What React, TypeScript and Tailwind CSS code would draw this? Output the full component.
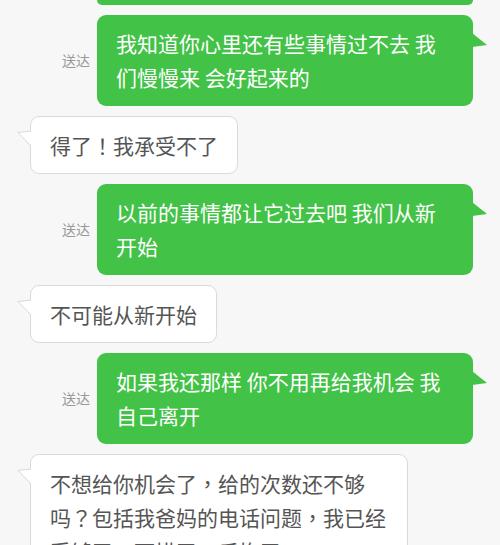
import type { ReactNode } from "react";

const font = { fontFamily: '"Noto Sans CJK SC", "Noto Sans", sans-serif' };
const punctFont = { fontFamily: '"Noto Sans CJK TC", "Noto Sans CJK SC", sans-serif' };

type Msg = { me: boolean; text: string };

const messages: Msg[] = [
  { me: true, text: "我知道你心里还有些事情过不去 我们慢慢来 会好起来的" },
  { me: false, text: "得了！我承受不了" },
  { me: true, text: "以前的事情都让它过去吧 我们从新开始" },
  { me: false, text: "不可能从新开始" },
  { me: true, text: "如果我还那样 你不用再给我机会 我自己离开" },
  { me: false, text: "不想给你机会了，给的次数还不够吗？包括我爸妈的电话问题，我已经受够了，可惜了，后悔了" },
];

// full-width punctuation sits centred in the screenshot, like the TC face draws it
function withPunct(text: string): ReactNode[] {
  return text.split(/([！，？])/).map((part, i) =>
    /^[！，？]$/.test(part) ? (
      <span key={i} style={punctFont}>
        {part}
      </span>
    ) : (
      part
    )
  );
}

function MyBubble({ text }: { text: string }) {
  return (
    <div className="flex items-center justify-end pr-[27px]">
      <span className="mr-[7px] text-[14px] text-[#999999]">送达</span>
      <div className="relative w-[376px] rounded-[9px] bg-[#42c247] px-[19px] pt-[11px] pb-[12px] text-[21px] leading-[34px] text-white">
        {withPunct(text)}
        <svg className="absolute top-0 right-[-15px]" width="16" height="40" viewBox="0 0 16 40">
          <polygon points="0,18 15,30 0,32" fill="#42c247" />
        </svg>
      </div>
    </div>
  );
}

function TheirBubble({ text }: { text: string }) {
  return (
    <div className="flex pl-[30px]">
      <div className="relative max-w-[378px] rounded-[9px] border border-[#dadada] bg-white px-[19px] pt-[11px] pb-[11px] text-[21px] leading-[34px] text-[#555555]">
        {withPunct(text)}
        <svg className="absolute top-[-1px] left-[-14px]" width="15" height="40" viewBox="0 0 15 40">
          <polygon points="14.5,15 1,16.5 14.5,30" fill="#ffffff" />
          <polyline points="14,15 1,16.5 14,30" fill="none" stroke="#dadada" strokeWidth="1" />
        </svg>
      </div>
    </div>
  );
}

export default function App() {
  return (
    <div className="h-[545px] w-[500px] overflow-hidden bg-[#f7f7f7]" style={font}>
      <div className="ml-[97px] h-[5px] w-[376px] rounded-b-[9px] bg-[#42c247]" />
      <div className="mt-[10px] flex flex-col gap-[10px]">
        {messages.map((m, i) =>
          m.me ? <MyBubble key={i} text={m.text} /> : <TheirBubble key={i} text={m.text} />
        )}
      </div>
    </div>
  );
}
